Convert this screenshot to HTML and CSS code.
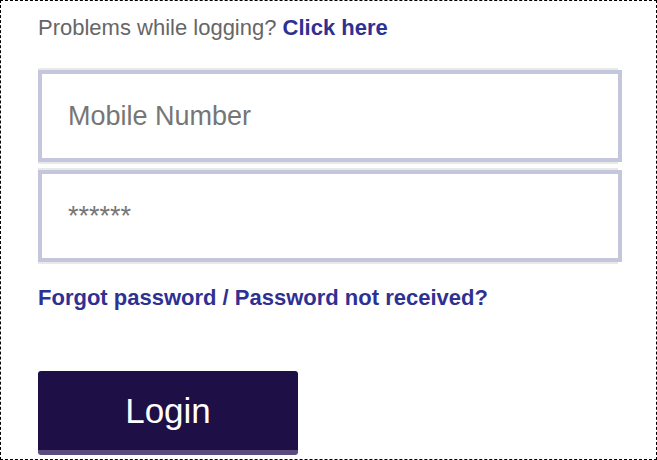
FILE: index.html
```html
<!DOCTYPE html>
<html lang="en">
<head>
<meta charset="utf-8">
<title>Login</title>
<link rel="stylesheet" href="styles.css">
</head>
<body>
<div class="frame">
  <p class="help">Problems while logging? <a class="help-link" href="#">Click here</a></p>
  <form class="form">
    <input class="field" type="text" placeholder="Mobile Number">
    <input class="field field-gap" type="password" placeholder="******">
    <a class="forgot" href="#">Forgot password / Password not received?</a>
    <button class="login" type="button">Login</button>
  </form>
</div>
</body>
</html>
```
FILE: styles.css
```css
html, body {
  margin: 0;
  padding: 0;
  background: #fff;
}
body {
  font-family: "Liberation Sans", Arial, sans-serif;
}
.frame {
  box-sizing: border-box;
  width: 657px;
  height: 460px;
  border: 1px dashed #000;
  padding: 14px 0 0 37px;
  overflow: hidden;
}
.help {
  margin: 0;
  font-size: 22px;
  line-height: 25px;
  color: #666;
}
.help-link {
  color: #2e3192;
  font-weight: bold;
  text-decoration: none;
}
.form {
  display: flex;
  flex-direction: column;
  align-items: flex-start;
  margin-top: 30px;
}
.field {
  box-sizing: border-box;
  width: 584px;
  height: 92px;
  margin: 0;
  border: 4px solid #c4c7dc;
  border-radius: 0;
  padding: 0 0 0 26px;
  font-family: "Liberation Sans", Arial, sans-serif;
  font-size: 27px;
  color: #333;
  background: #fff;
  outline: none;
  box-shadow: -2px -4px 0 -2px #e9e9e9, -2px 4px 0 -2px #e9e9e9;
}
.field::placeholder {
  color: #767676;
  opacity: 1;
}
.field-gap {
  margin-top: 8px;
}
.forgot {
  display: block;
  margin-top: 23px;
  font-size: 22px;
  line-height: 25px;
  font-weight: bold;
  color: #2e3192;
  text-decoration: none;
}
.login {
  box-sizing: border-box;
  width: 260px;
  height: 84px;
  margin-top: 61px;
  border: none;
  border-bottom: 5px solid #5a4b7c;
  border-radius: 3px;
  background: #1e0f46;
  color: #fff;
  font-family: "Liberation Sans", Arial, sans-serif;
  font-size: 35px;
  line-height: 79px;
  padding: 0 0 2px 0;
  cursor: pointer;
}
```
